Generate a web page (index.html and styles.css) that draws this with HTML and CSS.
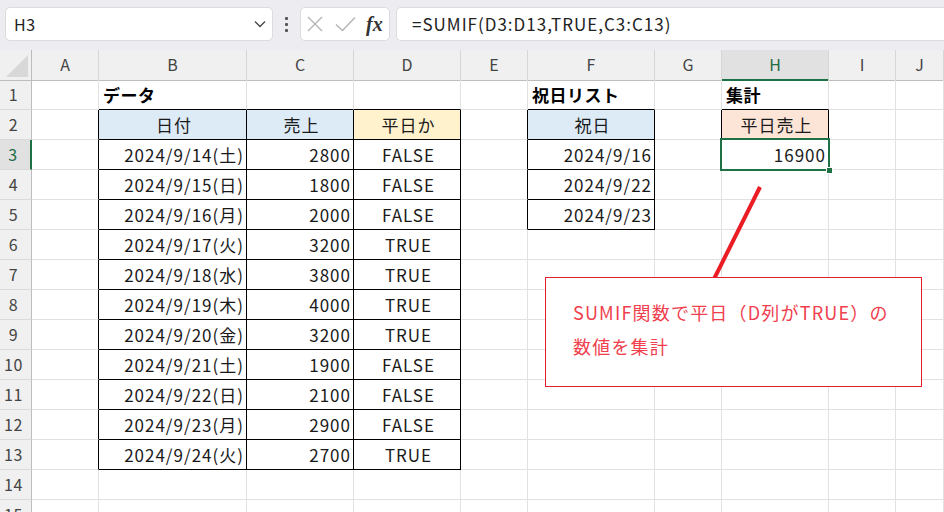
FILE: index.html
```html
<!DOCTYPE html>
<html lang="ja">
<head>
<meta charset="utf-8">
<title>SUMIF</title>
<link rel="stylesheet" href="styles.css">
</head>
<body>
<div class="app">
  <div class="fbar">
    <div class="namebox">
      <span class="nb-text">H3</span>
      <svg class="chev" width="12" height="8" viewBox="0 0 12 8"><path d="M1 1.5 L6 6.5 L11 1.5" fill="none" stroke="#444" stroke-width="1.3"/></svg>
    </div>
    <div class="vdots"><i></i><i></i><i></i></div>
    <div class="fxbox">
      <svg width="16" height="16" viewBox="0 0 16 16"><path d="M1 1 L15 15 M15 1 L1 15" fill="none" stroke="#b4b4b4" stroke-width="1.4"/></svg>
      <svg width="21" height="16" viewBox="0 0 21 16"><path d="M1 8.5 L7.5 14.5 L20 1.5" fill="none" stroke="#b4b4b4" stroke-width="1.4"/></svg>
      <span class="fx">fx</span>
    </div>
    <div class="formula">=SUMIF(D3:D13,TRUE,C3:C13)</div>
  </div>

  <div class="sheet">
    <div class="row hdr">
      <div class="corner"><span class="tri"></span></div>
      <div class="ch">A</div><div class="ch">B</div><div class="ch">C</div><div class="ch">D</div><div class="ch">E</div><div class="ch">F</div><div class="ch">G</div><div class="ch sel">H</div><div class="ch">I</div><div class="ch">J</div>
    </div>

    <div class="row">
      <div class="rh">1</div>
      <div class="c"></div><div class="c bB b">データ</div><div class="c bB"></div><div class="c bB"></div><div class="c"></div><div class="c bB b">祝日リスト</div><div class="c"></div><div class="c bB b">集計</div><div class="c"></div><div class="c"></div>
    </div>
    <div class="row">
      <div class="rh">2</div>
      <div class="c bR"></div><div class="c bR bB blue ctr">日付</div><div class="c bR bB blue ctr">売上</div><div class="c bR bB yellow ctr">平日か</div><div class="c bR"></div><div class="c bR bB blue ctr">祝日</div><div class="c bR"></div><div class="c bR bB peach ctr">平日売上</div><div class="c"></div><div class="c"></div>
    </div>
    <div class="row">
      <div class="rh sel">3</div>
      <div class="c bR"></div><div class="c bR bB r">2024/9/14(土)</div><div class="c bR bB r">2800</div><div class="c bR bB ctr">FALSE</div><div class="c bR"></div><div class="c bR bB r">2024/9/16</div><div class="c"></div><div class="c r">16900</div><div class="c"></div><div class="c"></div>
    </div>
    <div class="row">
      <div class="rh">4</div>
      <div class="c bR"></div><div class="c bR bB r">2024/9/15(日)</div><div class="c bR bB r">1800</div><div class="c bR bB ctr">FALSE</div><div class="c bR"></div><div class="c bR bB r">2024/9/22</div><div class="c"></div><div class="c"></div><div class="c"></div><div class="c"></div>
    </div>
    <div class="row">
      <div class="rh">5</div>
      <div class="c bR"></div><div class="c bR bB r">2024/9/16(月)</div><div class="c bR bB r">2000</div><div class="c bR bB ctr">FALSE</div><div class="c bR"></div><div class="c bR bB r">2024/9/23</div><div class="c"></div><div class="c"></div><div class="c"></div><div class="c"></div>
    </div>
    <div class="row">
      <div class="rh">6</div>
      <div class="c bR"></div><div class="c bR bB r">2024/9/17(火)</div><div class="c bR bB r">3200</div><div class="c bR bB ctr">TRUE</div><div class="c"></div><div class="c"></div><div class="c"></div><div class="c"></div><div class="c"></div><div class="c"></div>
    </div>
    <div class="row">
      <div class="rh">7</div>
      <div class="c bR"></div><div class="c bR bB r">2024/9/18(水)</div><div class="c bR bB r">3800</div><div class="c bR bB ctr">TRUE</div><div class="c"></div><div class="c"></div><div class="c"></div><div class="c"></div><div class="c"></div><div class="c"></div>
    </div>
    <div class="row">
      <div class="rh">8</div>
      <div class="c bR"></div><div class="c bR bB r">2024/9/19(木)</div><div class="c bR bB r">4000</div><div class="c bR bB ctr">TRUE</div><div class="c"></div><div class="c"></div><div class="c"></div><div class="c"></div><div class="c"></div><div class="c"></div>
    </div>
    <div class="row">
      <div class="rh">9</div>
      <div class="c bR"></div><div class="c bR bB r">2024/9/20(金)</div><div class="c bR bB r">3200</div><div class="c bR bB ctr">TRUE</div><div class="c"></div><div class="c"></div><div class="c"></div><div class="c"></div><div class="c"></div><div class="c"></div>
    </div>
    <div class="row">
      <div class="rh">10</div>
      <div class="c bR"></div><div class="c bR bB r">2024/9/21(土)</div><div class="c bR bB r">1900</div><div class="c bR bB ctr">FALSE</div><div class="c"></div><div class="c"></div><div class="c"></div><div class="c"></div><div class="c"></div><div class="c"></div>
    </div>
    <div class="row">
      <div class="rh">11</div>
      <div class="c bR"></div><div class="c bR bB r">2024/9/22(日)</div><div class="c bR bB r">2100</div><div class="c bR bB ctr">FALSE</div><div class="c"></div><div class="c"></div><div class="c"></div><div class="c"></div><div class="c"></div><div class="c"></div>
    </div>
    <div class="row">
      <div class="rh">12</div>
      <div class="c bR"></div><div class="c bR bB r">2024/9/23(月)</div><div class="c bR bB r">2900</div><div class="c bR bB ctr">FALSE</div><div class="c"></div><div class="c"></div><div class="c"></div><div class="c"></div><div class="c"></div><div class="c"></div>
    </div>
    <div class="row">
      <div class="rh">13</div>
      <div class="c bR"></div><div class="c bR bB r">2024/9/24(火)</div><div class="c bR bB r">2700</div><div class="c bR bB ctr">TRUE</div><div class="c"></div><div class="c"></div><div class="c"></div><div class="c"></div><div class="c"></div><div class="c"></div>
    </div>
    <div class="row">
      <div class="rh">14</div>
      <div class="c"></div><div class="c"></div><div class="c"></div><div class="c"></div><div class="c"></div><div class="c"></div><div class="c"></div><div class="c"></div><div class="c"></div><div class="c"></div>
    </div>
    <div class="row">
      <div class="rh">15</div>
      <div class="c"></div><div class="c"></div><div class="c"></div><div class="c"></div><div class="c"></div><div class="c"></div><div class="c"></div><div class="c"></div><div class="c"></div><div class="c"></div>
    </div>
  </div>

  <div class="selection"><span class="handle"></span></div>
  <svg class="arrow" width="944" height="512" viewBox="0 0 944 512"><line x1="760" y1="187" x2="714" y2="279" stroke="#ec1c24" stroke-width="4"/></svg>
  <div class="callout">SUMIF関数で平日（D列がTRUE）の<br>数値を集計</div>
</div>
</body>
</html>
```

FILE: styles.css
```css
* { box-sizing: border-box; }
html, body { margin: 0; padding: 0; }
body {
  width: 944px;
  height: 512px;
  overflow: hidden;
  background: #ffffff;
  font-family: "Noto Sans CJK JP", "Noto Sans", sans-serif;
  color: #222;
}
.app { position: relative; width: 944px; height: 512px; overflow: hidden; }

/* formula bar */
.fbar {
  height: 50px;
  background: #edecf0;
  display: flex;
  align-items: flex-start;
  padding: 7px 0 0 5px;
}
.namebox {
  width: 268px;
  height: 34px;
  background: #fff;
  border: 1px solid #dcdcdc;
  border-radius: 5px;
  display: flex;
  align-items: center;
  justify-content: space-between;
  padding: 0 6px 0 8px;
}
.nb-text { font-size: 16px; color: #222; letter-spacing: 0.5px; }
.vdots {
  width: 27px;
  height: 34px;
  display: flex;
  flex-direction: column;
  align-items: center;
  justify-content: center;
  gap: 3px;
}
.vdots i { display: block; width: 3px; height: 3px; background: #555; border-radius: 1px; }
.fxbox {
  width: 90px;
  height: 34px;
  background: #fff;
  border: 1px solid #dcdcdc;
  border-radius: 5px;
  display: flex;
  align-items: center;
  padding: 0 4px 0 6px;
  gap: 12px;
}
.fx {
  font-family: "Liberation Serif", "DejaVu Serif", serif;
  font-style: italic;
  font-weight: bold;
  font-size: 20px;
  color: #333;
  margin-left: -2px;
}
.formula {
  flex: 1;
  margin-left: 6px;
  height: 34px;
  background: #fff;
  border: 1px solid #dcdcdc;
  border-right: none;
  border-radius: 5px 0 0 5px;
  font-size: 17px;
  letter-spacing: 1px;
  line-height: 32px;
  padding-left: 15px;
  color: #222;
}

/* grid */
.row {
  display: grid;
  grid-template-columns: 32px 67px 148px 107px 107px 67px 127px 67px 107px 67px 1fr;
  height: 30px;
}
.hdr .corner {
  background: #f0f0f0;
  border-right: 1px solid #bdbdbd;
  border-bottom: 1px solid #bdbdbd;
  position: relative;
}
.tri {
  position: absolute;
  right: 3px;
  bottom: 3px;
  width: 0; height: 0;
  border-left: 22px solid transparent;
  border-bottom: 22px solid #d8d8d8;
}
.ch {
  background: #f0f0f0;
  border-right: 1px solid #d6d6d6;
  border-bottom: 1px solid #bdbdbd;
  text-align: center;
  font-size: 16px;
  line-height: 29px;
  color: #444;
}
.ch.sel {
  background: #e1e1e1;
  border-bottom: 2px solid #1e7145;
  color: #1e6b45;
}
.rh {
  background: #f0f0f0;
  border-right: 1px solid #bdbdbd;
  border-bottom: 1px solid #dadada;
  text-align: center;
  padding-right: 4px;
  font-size: 16px;
  letter-spacing: 0.5px;
  line-height: 29px;
  color: #444;
}
.rh.sel {
  background: #e1e1e1;
  border-right: 2px solid #1e7145;
  color: #1e6b45;
}
.c {
  border-right: 1px solid #e1e1e1;
  border-bottom: 1px solid #e1e1e1;
  font-size: 17px;
  letter-spacing: 1px;
  line-height: 29px;
  padding: 0 2px 0 4px;
  white-space: nowrap;
  color: #1a1a1a;
}
.c.bR { border-right-color: #000; }
.c.bB { border-bottom-color: #000; }
.b { font-weight: bold; color: #000; letter-spacing: 0.5px; }
.r { text-align: right; }
.ctr { text-align: center; padding-left: 5px; }
.blue { background: #ddebf7; }
.yellow { background: #fff2cc; }
.peach { background: #fce4d6; }

/* overlays */
.selection {
  position: absolute;
  left: 720px;
  top: 138px;
  width: 110px;
  height: 33px;
  border: 2px solid #1e7145;
}
.handle {
  position: absolute;
  right: -5px;
  bottom: -5px;
  width: 7px;
  height: 7px;
  background: #1e7145;
  border: 1px solid #fff;
}
.arrow { position: absolute; left: 0; top: 0; pointer-events: none; }
.callout {
  position: absolute;
  left: 545px;
  top: 277px;
  width: 377px;
  height: 110px;
  background: #fff;
  border: 1px solid #e0202c;
  color: #f0404e;
  font-size: 18px;
  letter-spacing: 1.2px;
  line-height: 34px;
  padding: 17px 0 0 27px;
}
```
